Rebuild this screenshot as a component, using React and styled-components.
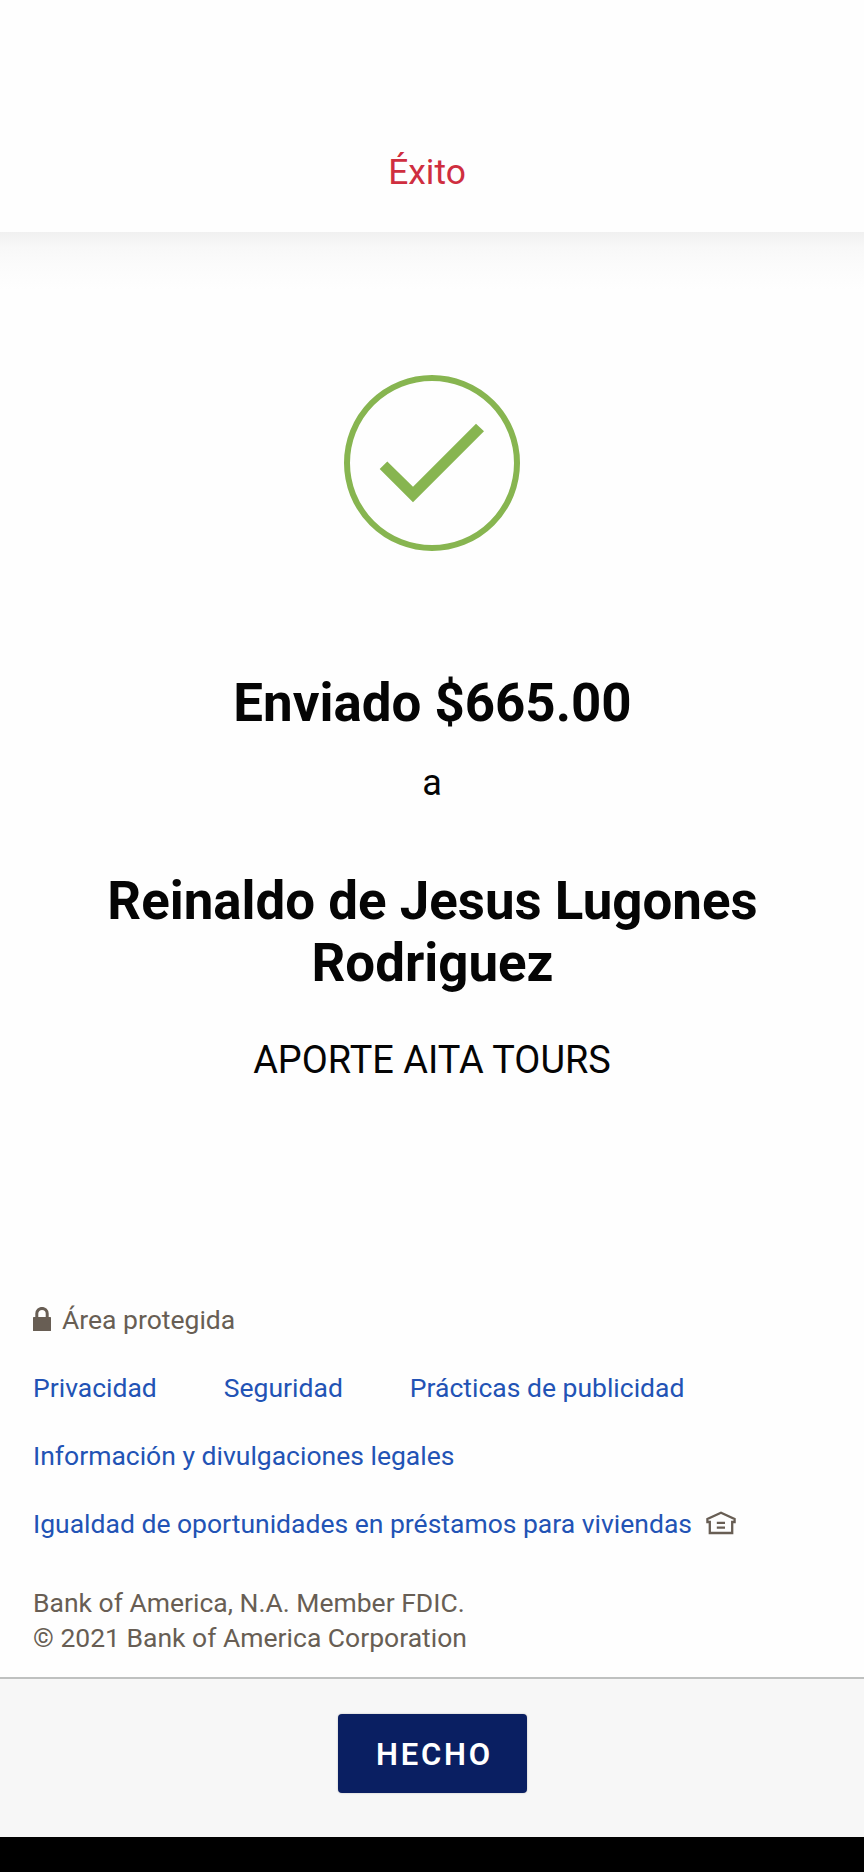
import React from 'react'
import styled, { createGlobalStyle } from 'styled-components'

const LINK_ROWS = [
  [{name: "Privacidad"}, {name: "Seguridad"}, {name: "Prácticas de publicidad"}],
  [{name: "Información y divulgaciones legales"}],
  [{name: "Igualdad de oportunidades en préstamos para viviendas", house: true}],
];

const GlobalStyle = createGlobalStyle`
  body {
    margin: 0;
    background: #fefefe;
    font-family: Roboto, "Liberation Sans", sans-serif;
  }
`;
const Screen = styled.div`
  display: flex;
  flex-direction: column;
  width: 864px;
  height: 1872px;
  overflow: hidden;
`;
const Header = styled.header`
  flex: none;
  box-sizing: border-box;
  height: 232px;
  padding: 152px 10px 0 0;
  background: #fefefe;
  color: #cf2e3f;
  font-size: 35.4px;
  line-height: 40px;
  text-align: center;
`;
const Content = styled.main`
  flex: none;
  box-sizing: border-box;
  display: flex;
  flex-direction: column;
  align-items: center;
  height: 1070px;
  padding-top: 143px;
  background: linear-gradient(#f0f0f0, #f8f8f8 16px, #fbfbfb 32px, #fefefe 58px);
  color: #050505;
  text-align: center;
`;
const Title = styled.h1`
  width: 700px;
  margin: ${props => props.$top}px 0 0 1px;
  font-size: 52.85px;
  font-weight: 700;
  line-height: 62px;
`;
const Line = styled.p`
  margin: ${props => props.$top}px 0 0;
  font-size: ${props => props.$size}px;
  line-height: 42px;
`;
const Footer = styled.footer`
  flex: none;
  box-sizing: border-box;
  height: 375px;
  padding-left: 33px;
  color: #685e54;
  font-size: 26.5px;
`;
const Secure = styled.div`
  display: flex;
  align-items: center;
  gap: 10px;
  line-height: 36px;
`;
const LinkRow = styled.nav`
  display: flex;
  align-items: center;
  gap: 67px;
  margin-top: 32px;
  line-height: 36px;
`;
const Link = styled.a`
  display: flex;
  align-items: center;
  gap: 14px;
  color: #2253b5;
`;
const Legal = styled.p`
  margin: 43px 0 0;
  line-height: 35px;
`;
const ActionBar = styled.div`
  flex: none;
  box-sizing: border-box;
  display: flex;
  justify-content: center;
  align-items: flex-start;
  height: 160px;
  padding-top: 35px;
  border-top: 2px solid #bfc1c0;
  background: #f7f7f7;
`;
const DoneButton = styled.button`
  width: 189px;
  height: 79px;
  padding: 1px 0 0 5px;
  border: none;
  border-radius: 4px;
  background: #0a1f62;
  box-shadow: 0 0 2px rgba(0,0,0,0.25);
  color: #fff;
  font-family: inherit;
  font-size: 31px;
  font-weight: 600;
  letter-spacing: 2.8px;
`;
const NavBar = styled.div`
  flex: 1;
  background: #000;
`;

const SuccessIcon = () => (
  <svg width="176" height="176" viewBox="0 0 176 176">
    <circle cx="88" cy="88" r="85" fill="none" stroke="#87b550" strokeWidth="6" />
    <path d="M35.7 94 43.3 86.5 69 111.7 132 48.7 140 56.3 69 127.3Z" fill="#87b550" />
  </svg>
)

const LockIcon = () => (
  <svg width="19" height="26" viewBox="0 0 19 26">
    <path d="M3.8 12V6.6A5.2 5.2 0 0 1 14.2 6.6V12" fill="none" stroke="#685e54" strokeWidth="3" />
    <rect x="0" y="10" width="18" height="14" rx="0.6" fill="#685e54" />
  </svg>
)

const HouseIcon = () => (
  <svg width="30" height="26" viewBox="0 0 30 26" fill="none" stroke="#685e54" strokeWidth="2.3">
    <path d="M1.4 11V8L15 1.7 28.6 8V11H26.2V22H3.8V11Z" />
    <path d="M10.8 11.8H19M10.8 16.6H19" />
  </svg>
)

export default class App extends React.Component {
  render () {
    return (
      <Screen>
        <GlobalStyle />
        <Header>Éxito</Header>
        <Content>
          <SuccessIcon />
          <Title $top={121}>Enviado $665.00</Title>
          <Line $top={28} $size={36}>a</Line>
          <Title $top={66}>Reinaldo de Jesus Lugones Rodriguez</Title>
          <Line $top={45} $size={37.9}>APORTE AITA TOURS</Line>
        </Content>
        <Footer>
          <Secure><LockIcon />Área protegida</Secure>
          {LINK_ROWS.map((row, idx) => {
            return (
              <LinkRow key={idx}>
                {row.map((link) => {
                  return (<Link key={link.name}>{link.name}{link.house && <HouseIcon />}</Link>)
                })}
              </LinkRow>
            )
          })}
          <Legal>
            Bank of America, N.A. Member FDIC.<br />
            © 2021 Bank of America Corporation
          </Legal>
        </Footer>
        <ActionBar>
          <DoneButton>HECHO</DoneButton>
        </ActionBar>
        <NavBar />
      </Screen>
    )
  }
}
